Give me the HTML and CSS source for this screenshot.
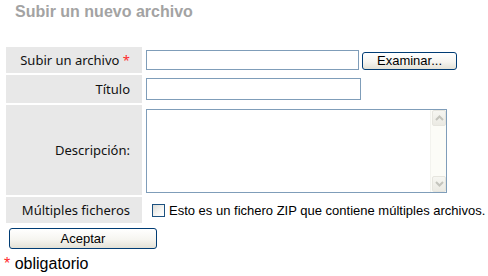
FILE: index.html
```html
<!DOCTYPE html>
<html lang="es">
<head>
<meta charset="utf-8">
<title>Subir un nuevo archivo</title>
<link rel="stylesheet" href="styles.css">
</head>
<body>
<div class="page">
  <h2 class="title">Subir un nuevo archivo</h2>
  <form class="form">
    <table class="fields">
      <tr class="row-file">
        <th>Subir un archivo <span class="req">*</span></th>
        <td>
          <div class="file">
            <input class="text text-file" type="text">
            <button class="btn browse" type="button">Examinar...</button>
          </div>
        </td>
      </tr>
      <tr class="row-title">
        <th>Título</th>
        <td><input class="text text-title" type="text"></td>
      </tr>
      <tr class="row-desc">
        <th>Descripción:</th>
        <td>
          <div class="area">
            <textarea class="area-input"></textarea>
            <div class="scrollbar">
              <span class="sb-btn"><svg width="9" height="6" viewBox="0 0 9 6"><path d="M1 5 L4.5 1.5 L8 5" fill="none" stroke="#c4c4bc" stroke-width="2"/></svg></span>
              <span class="sb-track"></span>
              <span class="sb-btn"><svg width="9" height="6" viewBox="0 0 9 6"><path d="M1 1 L4.5 4.5 L8 1" fill="none" stroke="#c4c4bc" stroke-width="2"/></svg></span>
            </div>
          </div>
        </td>
      </tr>
      <tr class="row-multi">
        <th>Múltiples ficheros</th>
        <td>
          <label class="check">
            <input class="check-box" type="checkbox">
            <span class="check-text">Esto es un fichero ZIP que contiene múltiples archivos.</span>
          </label>
        </td>
      </tr>
    </table>
    <button class="btn submit" type="submit">Aceptar</button>
    <p class="note"><span class="req">*</span> obligatorio</p>
  </form>
</div>
</body>
</html>
```

FILE: styles.css
```css
* { box-sizing: border-box; }

html, body {
  margin: 0;
  padding: 0;
  background: #ffffff;
}

body {
  font-family: "Liberation Sans", Arial, sans-serif;
  font-size: 13px;
  color: #000;
}

.page {
  padding: 0 4px;
}

.title {
  margin: 0;
  padding: 2px 0 0 11px;
  font-size: 16px;
  line-height: 20px;
  font-weight: bold;
  color: #a3a3a3;
}

.form {
  margin: 23px 0 0;
}

.fields {
  border-collapse: separate;
  border-spacing: 2px;
  margin: 0;
}

.fields th {
  box-sizing: content-box;
  width: 120px;
  min-width: 120px;
  padding: 0 12px 0 4px;
  background: #e8e8e8;
  text-align: right;
  font-weight: normal;
  font-family: "Noto Sans", Tahoma, sans-serif;
  font-size: 13px;
  color: #111;
  vertical-align: middle;
  white-space: nowrap;
}

.fields td {
  padding: 0 0 0 2px;
  vertical-align: middle;
}

.row-file th { height: 26px; }
.row-title th { height: 28px; }
.row-desc th { height: 90px; }
.row-multi th { height: 26px; }

.req {
  color: #ff2a2a;
}

.text {
  display: block;
  margin: 0;
  padding: 1px 3px;
  border: 1px solid #7f9db9;
  background: #fff;
  font: 13px "Liberation Sans", Arial, sans-serif;
}

.file {
  display: flex;
  align-items: center;
  gap: 3px;
}

.text-file {
  width: 213px;
  height: 20px;
}

.text-title {
  width: 215px;
  height: 22px;
}

.btn {
  margin: 0;
  padding: 0;
  border: 1px solid #003c74;
  border-radius: 3px;
  background: linear-gradient(#ffffff 0%, #f6f5f0 55%, #e3e1d6 100%);
  font: 13px "Liberation Sans", Arial, sans-serif;
  color: #000;
  line-height: 15px;
}

.browse {
  width: 95px;
  height: 18px;
  margin-top: 1px;
}

.area {
  display: flex;
  width: 301px;
  height: 84px;
  border: 1px solid #7f9db9;
  background: #fff;
  margin-top: 1px;
}

.area-input {
  flex: 1;
  min-width: 0;
  margin: 0;
  padding: 2px;
  border: 0;
  outline: none;
  resize: none;
  background: #fff;
  font: 13px "Liberation Sans", Arial, sans-serif;
}

.scrollbar {
  display: flex;
  flex-direction: column;
  width: 16px;
  padding: 0 0 0 1px;
  background: #fcfcf7;
  border-left: 1px solid #f3f3ee;
}

.sb-btn {
  display: flex;
  align-items: center;
  justify-content: center;
  height: 16px;
  border: 1px solid #e6e5de;
  border-radius: 2px;
  background: linear-gradient(#f6f6f1, #ebeae3);
}

.sb-track {
  flex: 1;
}

.check {
  display: flex;
  align-items: center;
  gap: 4px;
  padding-left: 6px;
  margin-top: 1px;
}

.check-box {
  appearance: none;
  -webkit-appearance: none;
  flex: none;
  width: 13px;
  height: 13px;
  margin: 0;
  border: 1px solid #1c5180;
  background: linear-gradient(135deg, #dcdcd7 0%, #f6f6f4 60%, #ffffff 100%);
}

.check-text {
  white-space: nowrap;
  color: #000;
}

.submit {
  display: block;
  width: 148px;
  height: 21px;
  margin: 3px 0 0 5px;
}

.note {
  margin: 5px 0 0;
  font-size: 16px;
  line-height: 20px;
}
```
